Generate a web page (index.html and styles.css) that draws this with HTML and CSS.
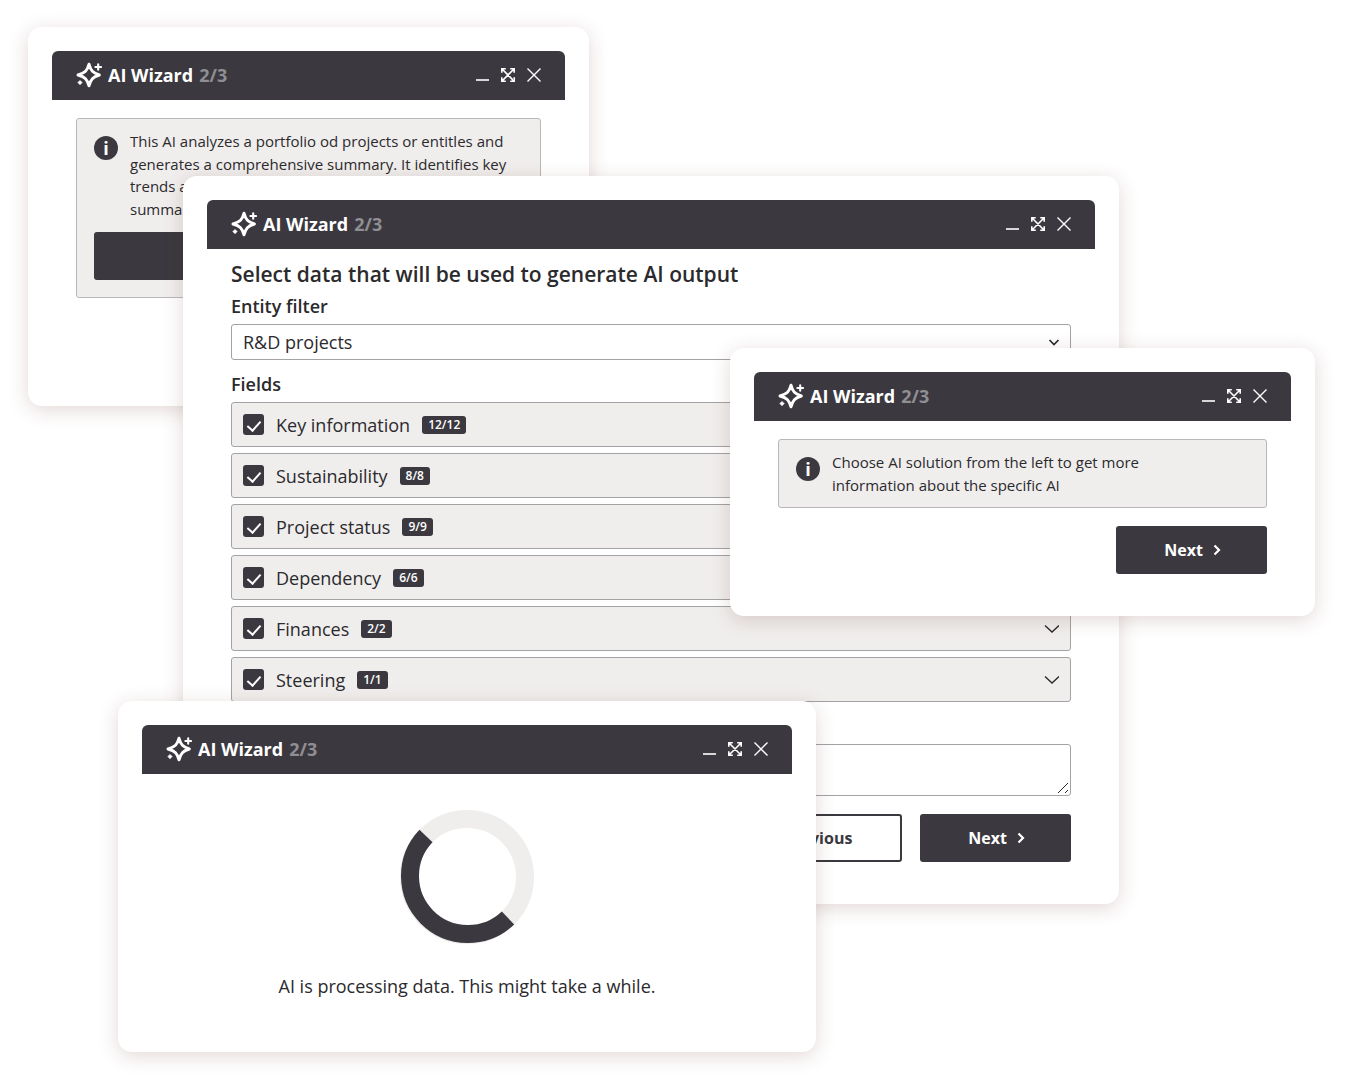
FILE: index.html
```
<!DOCTYPE html>
<html lang="en">
<head>
<meta charset="utf-8">
<meta name="viewport" content="width=device-width, initial-scale=1">
<title>AI Wizard</title>
<link rel="stylesheet" href="styles.css">
</head>
<body>
<svg class="sprite" aria-hidden="true">
  <symbol id="sparkle" viewBox="0 0 26 26">
    <path d="M13 2.2C14.8 8.8 16.8 11 23.4 13C16.8 15 14.8 17.2 13 23.8C11.2 17.2 9.2 15 2 13C9.2 11 11.2 8.8 13 2.2Z" fill="none" stroke="currentColor" stroke-width="2.9" stroke-linejoin="round"/>
    <path d="M22.2 2.2V7.8M19.4 5H25" stroke="currentColor" stroke-width="2.1" stroke-linecap="round"/>
    <path d="M4 18.4L6.2 20.6L4 22.8L1.8 20.6Z" fill="currentColor" stroke="currentColor" stroke-width=".6" stroke-linejoin="round"/>
  </symbol>
  <symbol id="minimize" viewBox="0 0 14 14">
    <path d="M1 12H14" stroke="currentColor" stroke-width="1.6"/>
  </symbol>
  <symbol id="expand" viewBox="0 0 14 14">
    <path d="M.8 4.8V.8H4.8M9.2 .8H13.2V4.8M13.2 9.2V13.2H9.2M4.8 13.2H.8V9.2M.8 .8L13.2 13.2M13.2 .8L.8 13.2" fill="none" stroke="currentColor" stroke-width="1.6"/>
  </symbol>
  <symbol id="close" viewBox="0 0 14 14">
    <path d="M.5 .5L13.5 13.5M13.5 .5L.5 13.5" stroke="currentColor" stroke-width="1.4"/>
  </symbol>
  <symbol id="chevron" viewBox="0 0 16 16">
    <path d="M2 4.5L9 11L16 4.5" fill="none" stroke="currentColor" stroke-width="1.4"/>
  </symbol>
  <symbol id="caret" viewBox="0 0 12 12">
    <path d="M1.5 4L6 8.5L10.5 4" fill="none" stroke="currentColor" stroke-width="1.7"/>
  </symbol>
  <symbol id="next" viewBox="0 0 12 12">
    <path d="M3.5 1.5L8 6L3.5 10.5" fill="none" stroke="currentColor" stroke-width="2.2"/>
  </symbol>
  <symbol id="grip" viewBox="0 0 12 12">
    <path d="M1 11L11 1M8 11L11 8" fill="none" stroke="currentColor" stroke-width="1"/>
  </symbol>
</svg>

<main class="desktop">
  <section class="window window-summary" aria-label="AI summary">
    <header class="bar">
      <svg class="logo"><use href="#sparkle"/></svg>
      <h2 class="name">AI Wizard</h2>
      <span class="step">2/3</span>
      <div class="controls">
        <button type="button" class="control" aria-label="Minimize"><svg><use href="#minimize"/></svg></button>
        <button type="button" class="control" aria-label="Expand"><svg><use href="#expand"/></svg></button>
        <button type="button" class="control" aria-label="Close"><svg><use href="#close"/></svg></button>
      </div>
    </header>
    <div class="body spaced">
      <div class="notice">
        <div class="notice-row">
          <span class="info" aria-hidden="true">i</span>
          <p>This AI analyzes a portfolio od projects or entitles and generates a comprehensive summary. It identifies key trends and presents them as one short<br>summary</p>
        </div>
        <button type="button" class="button wide" aria-label="Select"></button>
      </div>
    </div>
  </section>

  <section class="window window-data" aria-label="Data selection">
    <header class="bar">
      <svg class="logo"><use href="#sparkle"/></svg>
      <h2 class="name">AI Wizard</h2>
      <span class="step">2/3</span>
      <div class="controls">
        <button type="button" class="control" aria-label="Minimize"><svg><use href="#minimize"/></svg></button>
        <button type="button" class="control" aria-label="Expand"><svg><use href="#expand"/></svg></button>
        <button type="button" class="control" aria-label="Close"><svg><use href="#close"/></svg></button>
      </div>
    </header>
    <form class="body form">
      <h3 class="title">Select data that will be used to generate AI output</h3>
      <div class="group">
        <label class="label" for="filter">Entity filter</label>
        <div class="select">
          <select id="filter"><option>R&amp;D projects</option></select>
          <svg class="caret"><use href="#caret"/></svg>
        </div>
      </div>
      <fieldset class="group fields">
        <legend class="label">Fields</legend>
        <div class="field"><input type="checkbox" id="key" checked><label for="key">Key information</label><span class="count">12/12</span><button type="button" class="toggle" aria-label="Show Key information"><svg><use href="#chevron"/></svg></button></div>
        <div class="field"><input type="checkbox" id="sustainability" checked><label for="sustainability">Sustainability</label><span class="count">8/8</span><button type="button" class="toggle" aria-label="Show Sustainability"><svg><use href="#chevron"/></svg></button></div>
        <div class="field"><input type="checkbox" id="status" checked><label for="status">Project status</label><span class="count">9/9</span><button type="button" class="toggle" aria-label="Show Project status"><svg><use href="#chevron"/></svg></button></div>
        <div class="field"><input type="checkbox" id="dependency" checked><label for="dependency">Dependency</label><span class="count">6/6</span><button type="button" class="toggle" aria-label="Show Dependency"><svg><use href="#chevron"/></svg></button></div>
        <div class="field"><input type="checkbox" id="finances" checked><label for="finances">Finances</label><span class="count">2/2</span><button type="button" class="toggle" aria-label="Show Finances"><svg><use href="#chevron"/></svg></button></div>
        <div class="field"><input type="checkbox" id="steering" checked><label for="steering">Steering</label><span class="count">1/1</span><button type="button" class="toggle" aria-label="Show Steering"><svg><use href="#chevron"/></svg></button></div>
      </fieldset>
      <div class="group">
        <label class="label" for="notes">Notes</label>
        <div class="notes">
          <textarea id="notes"></textarea>
          <svg class="grip"><use href="#grip"/></svg>
        </div>
      </div>
      <div class="actions">
        <button type="button" class="button outline"><svg class="arrow back"><use href="#next"/></svg>Previous</button>
        <button type="button" class="button">Next<svg class="arrow"><use href="#next"/></svg></button>
      </div>
    </form>
  </section>

  <section class="window window-choose" aria-label="Choose solution">
    <header class="bar">
      <svg class="logo"><use href="#sparkle"/></svg>
      <h2 class="name">AI Wizard</h2>
      <span class="step">2/3</span>
      <div class="controls">
        <button type="button" class="control" aria-label="Minimize"><svg><use href="#minimize"/></svg></button>
        <button type="button" class="control" aria-label="Expand"><svg><use href="#expand"/></svg></button>
        <button type="button" class="control" aria-label="Close"><svg><use href="#close"/></svg></button>
      </div>
    </header>
    <div class="body spaced">
      <div class="notice">
        <div class="notice-row">
          <span class="info" aria-hidden="true">i</span>
          <p>Choose AI solution from the left to get more<br>information about the specific AI</p>
        </div>
      </div>
      <div class="actions">
        <button type="button" class="button">Next<svg class="arrow"><use href="#next"/></svg></button>
      </div>
    </div>
  </section>

  <section class="window window-progress" aria-label="Progress">
    <header class="bar">
      <svg class="logo"><use href="#sparkle"/></svg>
      <h2 class="name">AI Wizard</h2>
      <span class="step">2/3</span>
      <div class="controls">
        <button type="button" class="control" aria-label="Minimize"><svg><use href="#minimize"/></svg></button>
        <button type="button" class="control" aria-label="Expand"><svg><use href="#expand"/></svg></button>
        <button type="button" class="control" aria-label="Close"><svg><use href="#close"/></svg></button>
      </div>
    </header>
    <div class="body progress" role="status">
      <svg class="ring" viewBox="0 0 134 134" aria-hidden="true">
        <circle cx="67" cy="67" r="58" fill="none" stroke="#f0eeed" stroke-width="18"/>
        <path d="M108 108A58 58 0 0 1 26 26" fill="none" stroke="#3b393f" stroke-width="18"/>
      </svg>
      <p>AI is processing data. This might take a while.</p>
    </div>
  </section>
</main>
</body>
</html>
```
FILE: styles.css
```
:root {
  --ink: #3b393f;
  --text: #2b2a2d;
  --line: #a3a2a5;
  --fill: #f0eeed;
}

* { box-sizing: border-box; }

body {
  margin: 0;
  background: #fff;
  color: var(--text);
  font: 18px/24px "Open Sans", sans-serif;
}

h2, h3, p { margin: 0; }

button, select, textarea { font: inherit; color: inherit; }

.sprite { position: absolute; width: 0; height: 0; }

.desktop {
  position: relative;
  min-height: 1085px;
  overflow: hidden;
}

.window {
  position: absolute;
  padding: 24px;
  border-radius: 14px;
  background: #fff;
  box-shadow: 0 4px 20px rgba(90, 40, 30, 0.18);
}

.window-summary { top: 27px; left: 28px; right: 758px; padding-bottom: 90px; }
.window-data { top: 176px; left: 183px; right: 228px; }
.window-choose { top: 348px; left: 730px; right: 32px; }
.window-progress { top: 701px; left: 118px; right: 531px; }

.bar {
  display: flex;
  align-items: center;
  gap: 6px;
  height: 49px;
  padding: 0 24px 2px;
  border-radius: 6px 6px 0 0;
  background: var(--ink);
  color: #fff;
}

.logo { width: 26px; height: 26px; }

.name, .step { font-size: 18px; font-weight: 700; line-height: 24px; }

.step { color: #8f8e93; }

.controls { display: flex; gap: 12px; margin-left: auto; }

.control {
  display: flex;
  padding: 0;
  border: 0;
  background: none;
}

.control svg { width: 14px; height: 14px; }

.body { display: flex; flex-direction: column; padding: 12px 24px 18px; }

.spaced { gap: 18px; padding-top: 18px; }

.notice {
  display: flex;
  flex-direction: column;
  gap: 12px;
  padding: 11px 17px;
  border: 1px solid #b9b7ba;
  border-radius: 3px;
  background: var(--fill);
  font-size: 15px;
  line-height: 1.5;
}

.window-summary .notice { padding-bottom: 17px; }

.notice-row { display: flex; gap: 12px; }

.info {
  flex: none;
  width: 24px;
  height: 24px;
  margin-top: 6px;
  border-radius: 50%;
  background: var(--ink);
  color: #fff;
  font-size: 18px;
  font-weight: 700;
  line-height: 24px;
  text-align: center;
}

.form { gap: 12px; }

.title {
  margin-bottom: -6px;
  font-size: 21px;
  font-weight: 600;
  line-height: 27px;
}

.group { display: flex; flex-direction: column; gap: 6px; }

.fields { display: block; min-width: 0; margin: 0; padding: 0; border: 0; }

.label { padding: 0; font-weight: 600; }

.select, .notes { position: relative; }

.select select {
  display: block;
  width: 100%;
  height: 36px;
  padding: 0 11px;
  border: 1px solid var(--line);
  border-radius: 3px;
  background: #fff;
  appearance: none;
}

.caret {
  position: absolute;
  top: 12px;
  right: 11px;
  width: 12px;
  height: 12px;
  pointer-events: none;
}

.field {
  display: flex;
  align-items: center;
  gap: 12px;
  height: 45px;
  margin-top: 6px;
  padding: 0 11px;
  border: 1px solid var(--line);
  border-radius: 3px;
  background: var(--fill);
}

.field input {
  display: flex;
  justify-content: center;
  width: 21px;
  height: 21px;
  margin: 0;
  border-radius: 3px;
  background: var(--ink);
  appearance: none;
}

.field input:checked::before {
  content: "";
  width: 6px;
  height: 11px;
  margin-top: 4px;
  border: solid #fff;
  border-width: 0 2px 2px 0;
  transform: rotate(42deg);
}

.count {
  padding: 0 6px;
  border-radius: 3px;
  background: var(--ink);
  color: #fff;
  font-size: 12px;
  font-weight: 600;
  line-height: 18px;
}

.toggle {
  display: flex;
  margin-left: auto;
  padding: 0;
  border: 0;
  background: none;
}

.toggle svg { width: 16px; height: 16px; }

textarea {
  display: block;
  width: 100%;
  height: 52px;
  padding: 6px 11px;
  border: 1px solid var(--line);
  border-radius: 3px;
  background: #fff;
  resize: vertical;
}

textarea::-webkit-resizer { background: none; }

.grip {
  position: absolute;
  right: 2px;
  bottom: 2px;
  width: 12px;
  height: 12px;
  pointer-events: none;
}

.actions { display: flex; justify-content: flex-end; gap: 18px; }

.form .actions { margin-top: 6px; }

.button {
  display: flex;
  align-items: center;
  justify-content: center;
  gap: 8px;
  height: 48px;
  padding: 0 44px 0 48px;
  border: 0;
  border-radius: 3px;
  background: var(--ink);
  color: #fff;
  font-size: 16px;
  font-weight: 700;
  line-height: 24px;
}

.outline {
  padding: 0 48px 0 44px;
  border: 2px solid var(--ink);
  background: #fff;
  color: var(--ink);
}

.wide { width: 100%; }

.arrow { width: 12px; height: 12px; }

.back { transform: rotate(180deg); }

.progress { align-items: center; gap: 30px; padding: 36px 24px 30px; }

.ring { width: 134px; height: 134px; }
```
